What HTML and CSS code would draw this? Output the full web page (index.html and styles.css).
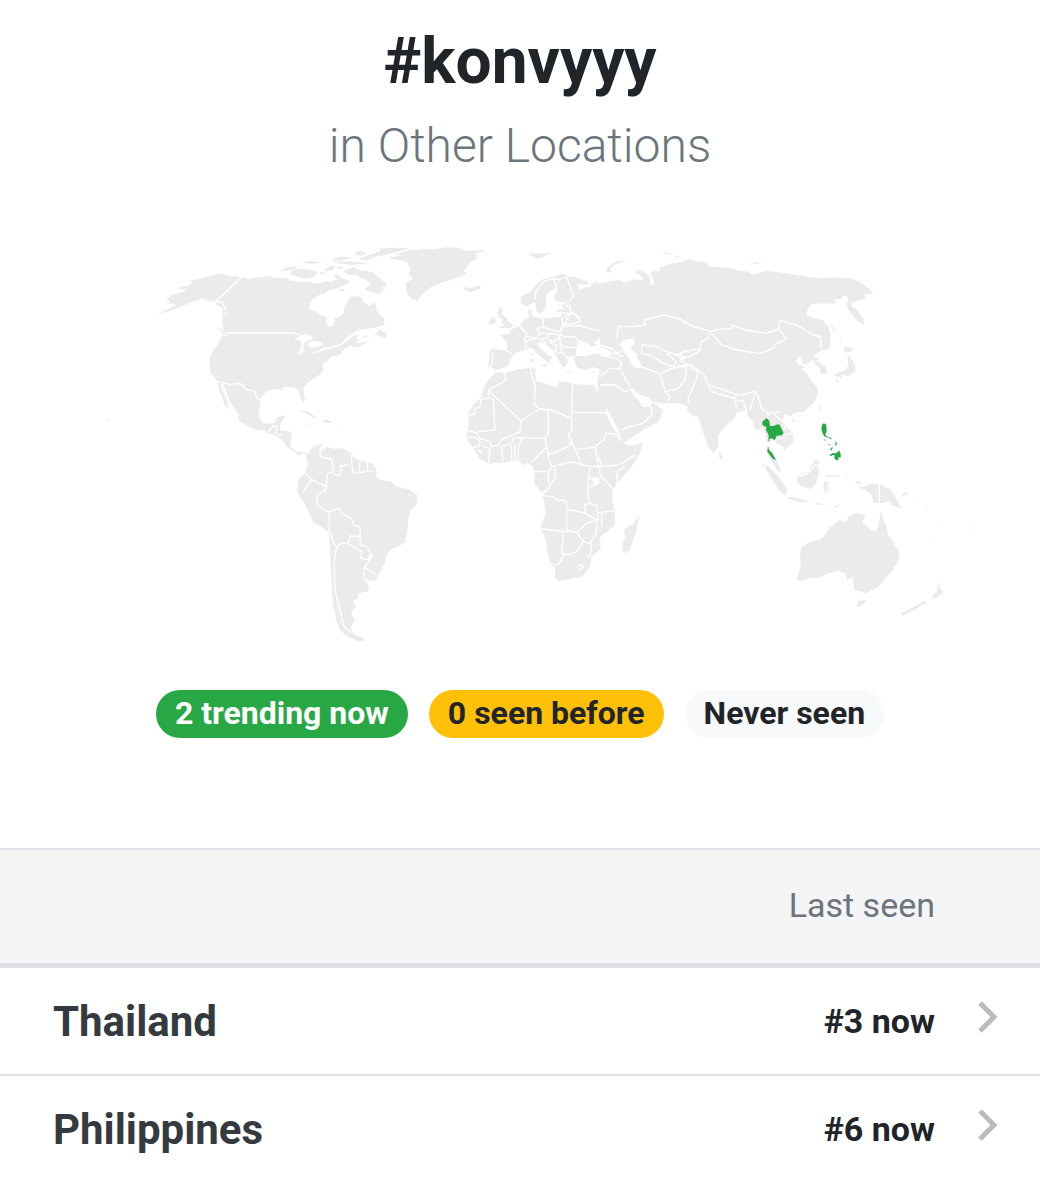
FILE: index.html
```html
<!DOCTYPE html>
<html lang="en">

<head>
    <meta charset="UTF-8">
    <meta name="viewport" content="width=device-width, initial-scale=1.0">
    <title>#konvyyy in Other Locations</title>
    <link rel="stylesheet" href="styles.css">
</head>

<body>
    <header class="page-header">
        <h1>#konvyyy</h1>
        <p class="lead">in Other Locations</p>
    </header>

    <svg class="world-map" viewBox="0 230 1040 420" role="img" aria-label="World map of trending countries">
        <!-- North and Central America -->
        <g transform="translate(140 230) scale(.3333)">
            <path class="land" d="M78 208L98 194 128 186 140 178 112 178 118 171 145 168 156 160 152 151 175 148 195 141 215 137 236 130 270 137 305 141 325 147 345 143 385 138 405 143 440 145 450 152 465 152 478 157 505 155 520 160 545 160 556 153 575 156 590 148 580 138 595 132 605 145 625 150 628 160 605 168 590 175 565 182 556 190 540 194 520 205 510 218 508 236 530 245 545 256 560 262 558 275 564 287 572 290 580 285 585 265 600 260 613 248 612 235 620 222 628 202 645 197 665 202 668 214 680 222 690 228 700 215 708 225 710 243 724 258 735 273 730 285 715 291 680 297 655 300 640 308 615 328 600 342 630 328 640 317 655 314 650 325 658 334 640 338 660 340 690 333 655 352 640 352 635 345 612 358 600 374 575 380 560 396 548 401 550 420 543 432 520 447 500 460 492 472 490 485 495 508 489 518 480 500 475 478 462 473 440 472 425 474 430 481 400 478 380 484 365 500 362 518 356 540 360 566 370 579 385 582 405 577 410 562 435 555 430 570 422 578 420 600 455 606 455 622 450 650 468 664 485 665 498 670 500 678 490 670 475 677 455 660 440 652 435 640 420 625 405 618 385 610 372 600 350 602 320 587 295 570 296 556 280 532 270 515 258 484 250 463 243 461 245 480 257 500 262 520 268 538 262 534 252 520 245 497 240 490 233 455 225 442 212 430 208 405 209 385 220 360 240 332 247 314 262 320 258 308 250 300 246 270 250 255 246 235 228 225 226 215 205 212 185 205 150 218 120 232 85 244 50 252 85 237 108 226 104 221 86 222 90 213Z"/>
            <path class="land" d="M420 125L440 112 475 108 458 119ZM447 133L465 116 500 118 533 126 524 140 495 146 470 140ZM480 96L520 93 550 99 505 101ZM565 110L584 105 582 120 552 125ZM538 126L557 129 545 136ZM575 90L600 80 640 82 600 93ZM572 97L620 94 690 100 630 105ZM590 112L612 108 600 120ZM640 70L660 62 682 69 660 78ZM650 88L720 64 780 53 780 60 740 74 700 82 680 92ZM610 124L640 112 665 122 695 125 720 145 740 165 722 169 735 180 724 184 718 194 690 184 672 178 692 163 680 149 660 142 650 136 625 136ZM590 182L608 175 616 184ZM703 315L718 300 720 292 725 305 738 312 740 324 728 318ZM663 317L685 318 675 323ZM233 292L250 302 263 319 248 310ZM472 540L505 545 530 563 520 564 500 550ZM545 573L560 568 580 578 555 578ZM500 582L512 583 505 586ZM590 581L600 582 592 585Z"/>
            <path class="land" d="M750 80L790 80 780 92 758 88Z"/>
            <path class="water" d="M465 327L490 313 512 315 520 326 500 332 490 345 491 362 484 374 476 370 485 345 482 333ZM505 336L522 332 542 336 548 345 530 352 515 355 505 347ZM505 372L540 360 552 352 572 352 535 366Z"/>
            <path class="border" d="M305 141L228 213 245 217 256 235 258 255M257 309H460L480 315M560 357L600 345 618 335M233 455L270 463 300 460 320 480 342 482 352 505 363 512M385 606L398 590V588H412M410 588V601L404 615M412 618L430 612 455 608M435 640L452 642M468 665V672"/>
        </g>

        <!-- South America -->
        <g transform="translate(280 430) scale(.3333)">
            <path class="land" d="M78 80L92 58 105 47 128 42 122 56 128 62 140 50 165 56 190 54 215 72 222 82 240 92 275 98 290 120 290 140 300 150 335 155 350 170 385 177 412 195 410 222 392 242 385 265 383 300 375 335 355 350 330 360 318 375 315 400 300 425 285 453 262 450 252 444 268 470 264 484 235 490 234 505 218 512 228 528 213 548 225 570 212 592 216 608 235 618 258 632 230 633 200 618 180 600 168 570 165 545 158 520 155 460 152 400 148 330 145 304 122 290 100 276 85 245 70 215 52 188 54 160 58 145 75 130 84 100Z"/>
            <path class="land" d="M0 5L33 8 30 45 15 44ZM225 618L245 622 235 628Z"/>
            <path class="border" d="M122 50L120 80 155 88 160 125 142 132 138 178 M160 130L175 138 185 128 180 108 205 105M215 75V100L220 130 240 128 262 124 280 122M240 94L238 125M263 97V122M75 130L95 148 68 188M95 148L120 162 138 168 135 180 112 195 112 225 135 242 148 245 178 235 185 250 215 265 220 285 240 292 240 320 210 318 205 342 188 338 170 350 162 340 148 304 148 245M205 342L245 365 242 385 265 388 272 370 262 350 242 345 240 320M272 370L278 378 254 412 252 444M254 412L290 436M170 350L162 400 165 480 180 540 190 585 212 608"/>
        </g>

        <!-- Greenland and Europe -->
        <g transform="translate(380 230) scale(.3333)">
            <path class="land" d="M25 85L70 75 45 72 85 62 130 57 165 58 200 52 245 53 240 58 270 62 320 60 285 72 292 85 270 98 262 112 250 122 262 130 240 140 205 152 180 160 155 170 135 185 112 213 92 205 80 188 78 160 98 145 85 132 92 120 82 98 60 90ZM0 55L60 53 90 55 50 66 0 78ZM0 150L20 160 15 172 0 170ZM0 258L12 265 10 280 0 283ZM0 300L20 310 15 325 0 318ZM250 168L265 176 300 166 303 175 270 187 255 181ZM445 72L480 70 515 68 480 85 465 85ZM678 120L700 100 745 91 700 105 690 118 695 127Z"/>
            <path class="land" d="M357 237L362 230 370 243 366 252 380 265 390 280 400 283 392 294 355 294 372 284 362 278 370 270 358 262 352 250ZM330 268L345 258 347 280 325 284ZM444 254L446 240 455 238 455 256 466 260 455 262Z"/>
            <path class="land" d="M330 360L345 356 380 362 382 340 372 326 360 315 385 312 400 295 418 290 430 272 445 264 448 256 462 260 490 266 520 262 543 260 546 247 530 244 530 238 550 238 545 223 570 217 530 215 522 200 533 180 530 172 515 182 498 196 498 212 502 220 492 242 480 252 470 245 465 215 440 230 425 222 422 200 450 185 468 165 490 147 515 142 545 132 570 138 600 147 625 155 625 163 590 163 600 180 618 172 635 170 632 160 648 160 645 150 658 160 680 156 715 150V370L690 362 660 348 662 332 640 335 650 344 635 350 620 338 600 330 590 348 588 370 588 380 570 385 560 382 564 398 550 415 540 398 530 378 520 362 500 345 482 336 470 340 480 355 500 372 518 385 510 388 508 402 495 390 470 370 456 352 440 358 420 364 402 372 390 388 388 402 375 413 345 420 335 412 324 410 328 380ZM480 406L500 402 498 412ZM450 388L460 386 459 396 452 398ZM453 368L458 368 456 382ZM555 425L575 426 565 430ZM630 426L650 420 640 428Z"/>
            <path class="land" d="M585 398L582 388 590 378 620 378 650 370 690 378 720 370V600L700 560 680 525 655 480 652 455 660 418 640 412 612 420 590 412Z"/>
            <path class="border" d="M465 210L468 185 490 155 520 145 538 150 560 140 570 140M520 145L530 172M560 142L570 170 580 200 568 215M336 368L340 380 332 410M378 361L395 370M420 290L440 310 435 330 440 358M430 300L425 292M490 265L488 292 470 295 480 310 470 325 440 320M438 335L470 325M490 292L515 300 540 305 550 290 545 262M475 310L510 310 500 325 475 328M510 310L540 315 545 290 600 287 635 298 662 302 664 320 655 332M555 262L567 250 585 252 602 275 575 282 550 282M548 248L570 250 555 280M568 220L572 245 600 262M540 315L525 335 505 330M540 315L555 320 585 320 595 335M540 340L555 352 588 352M540 320V345L545 365 560 378M510 338L530 345 525 365 545 370M552 222L570 235M660 415L710 410 715 385M660 450L690 440 715 415M500 340L485 330M555 382L585 378M665 345L720 362"/>
        </g>

        <!-- Africa and Arabia -->
        <g transform="translate(440 350) scale(.3333)">
            <path class="land" d="M140 98L150 85 165 68 180 66 195 70 235 57 275 53 288 58 284 75 290 88 283 92 310 98 335 108 352 110 358 95 380 95 400 102 440 105 462 103 470 125 475 115 480 130 498 168 498 190 510 215 520 235 540 262 550 280 570 287 608 278 600 310 578 345 545 385 520 418 516 430 518 460 524 480 525 525 500 545 480 562 482 598 455 620 450 650 425 680 390 688 352 692 345 680 345 655 330 635 322 600 318 570 302 535 304 520 315 500 316 480 312 450 304 428 282 398 285 365 275 345 262 340 250 345 235 332 215 332 195 338 170 338 145 342 115 322 95 290 78 262 85 235 85 190 100 165 125 140 130 115ZM598 495L590 540 570 600 555 610 546 602 550 575 556 560 552 538 580 522Z"/>
            <path class="water" d="M457 388L465 382 478 385 476 398 463 408Z"/>
            <path class="border" d="M195 70L198 92 145 120 145 145 122 148 120 170 105 175 103 193H80M145 120L242 213 300 177 283 165 285 105 275 80 272 53M145 145H160L165 240 115 245 110 250 85 242M80 262H105L120 275 118 290 95 292M110 250L120 265 150 275 155 290 175 285 190 265 220 255 240 245 242 213M300 177L325 180 325 250 315 265 245 263 220 265 215 280 185 290 188 335M300 177L330 178 395 205 398 102M402 188H498M395 205V240L385 255 395 275 385 290 325 315 315 265M215 285L215 332M225 280V330M245 263L235 300 235 332M320 290L325 320 335 350 325 365 285 365M275 340L290 320 320 290M335 350L395 335 425 345 475 350 480 350 532 345 555 335 585 315M395 275L405 298 465 292 490 270 500 250 525 252 548 275M405 298L425 345M465 292L475 350 480 355 480 375 520 418M555 350L532 365 530 410M475 320L485 345M325 365V395L330 410 305 430M345 350L345 385 320 420 305 437 340 440 350 452 375 450 385 480 405 482 435 490 435 465 450 460 443 440 445 400 450 350M450 385H480M450 410L475 400M450 460L470 468 475 510 440 520 410 548 380 540 380 482M435 490L470 510M524 482L475 488M305 537L380 545 410 545 430 575 450 580 468 550 470 515M370 545L365 610 370 620 355 643 340 643M365 610L385 615 410 605 430 575M455 580L450 620M485 490L485 530M130 290L150 295 145 342M95 292L115 320M115 300L125 310"/>
            <path class="border" d="M412 650L425 643 432 650 418 660ZM443 620L452 615"/>
        </g>

        <!-- Asia -->
        <g transform="translate(600 230) scale(.3333)">
            <path class="land" d="M0 160L30 155 60 150 75 158 100 148 130 150 122 138 108 128 112 120 128 122 145 135 152 155 150 165 162 162 162 150 150 130 165 122 178 125 180 112 215 100 240 97 265 88 290 94 320 97 328 110 360 112 400 115 415 122 445 125 460 133 500 122 560 130 620 140 660 145 700 142 750 145 780 155 800 170 822 190 790 195 800 208 775 210 765 215 755 218 756 228 772 240 790 265 793 286 772 272 745 240 740 220 745 210 740 198 728 198 725 208 700 207 710 215 700 222 675 220 635 222 622 240 620 255 640 265 668 270 685 290 692 310 690 345 685 358 665 362 650 370 640 382 655 385 660 400 675 408 683 425 672 433 662 430 658 410 645 402 638 388 620 405 608 400 600 378 588 392 595 402 618 410 605 418 620 430 632 450 650 470 655 490 640 520 610 545 580 550 572 560 555 552 548 572 565 595 578 612 580 635 565 650 552 662 550 650 530 640 520 625 512 632 505 625 503 645 520 670 530 690 540 718 525 708 510 685 500 665 503 640 495 605 488 595 465 600 462 580 445 560 440 545 430 540 410 550 400 570 375 590 355 615 355 650 340 670 325 650 308 605 295 560 278 558 260 540 265 530 240 520 190 520 155 515 145 502 120 495 95 472 90 478 105 500 120 515 125 530 150 530 158 515 190 540 175 575 130 600 68 640 55 600 20 535 0 500Z"/>
            <path class="water" d="M60 345L70 330 100 325 104 340 90 350 100 365 112 370 110 380 122 400 125 412 108 416 92 402 88 385 75 370ZM0 350L20 356 40 372 25 378 0 376Z"/>
            <path class="land" d="M20 115L45 95 80 90 45 103 30 118 35 128 20 125ZM180 64L205 68 222 75 200 72ZM220 76L242 80 228 82ZM450 97L490 99 465 102ZM682 272L700 292 712 308 702 302ZM720 322L728 328 722 330ZM735 350L762 355 750 365 735 368 730 360ZM742 375L752 382 765 405 766 425 745 438 725 435 712 442 702 436 720 425 740 418 745 400ZM715 440L730 438 722 446ZM705 445L715 450 712 464ZM655 530L660 522 662 538 658 545ZM575 570L586 568 580 578ZM357 662L368 680 365 688 358 685Z"/>
            <path class="border" d="M50 325L55 290 100 290 135 285 135 270 190 255 235 265 280 290 335 305 345 300 395 295 395 285 435 300 500 310 535 298 540 272 590 285 640 315 660 320 665 355M335 310L365 345 410 360 480 370 520 355 525 345 560 325 535 298M330 308L325 325 305 335 300 355 250 365 235 375 200 365 170 350 125 345 125 370M305 358L270 380 240 385 255 400 275 405 270 415 310 430 325 465 400 490 425 495 465 485 475 500 485 535 505 550 545 545M125 370L150 375 190 400 220 410 230 395 200 370M225 375L255 380 240 395M230 410L255 405 260 425 255 450 235 475 195 485 180 430 125 410M195 485L210 500 205 515M185 430L215 415 270 405 295 420 290 445 275 480 265 500 265 520M325 470L335 485 400 505 410 495M405 505L410 535M425 505L435 525 440 545 430 515 410 510M465 490L450 540M505 550L500 568M515 545L530 560 550 575 555 600M550 610L560 615 575 610M530 625L555 625M0 375L50 385 65 400 60 415 72 440 90 470M0 440L30 415 60 415M0 465L45 465 75 485 90 480M0 345L35 355 55 375 70 380M40 370L65 365M65 600L90 590 130 580 155 555 155 530M645 395L660 390"/>
            <path class="trending" d="M487 575L500 564 508 572 510 588 522 588 528 584 538 583 551 608 546 616 530 617 524 631 515 625 508 627 509 636 505 632 506 615 497 598 500 592 488 586ZM504 649L507 660 516 668 528 690 518 686 502 665ZM667 583L672 580 679 584 680 603 676 615 684 622 695 624 694 628 680 622 672 618 666 605 664 595ZM672 627L677 630 675 634ZM685 642L690 643 689 648ZM690 660L695 652 699 653 694 661ZM706 632L711 640 709 646 704 645 707 640ZM689 675L697 670 706 670 714 666 718 661 722 672 722 684 715 682 715 691 709 691 703 685 704 676 698 675 691 679Z"/>
        </g>

        <!-- Indonesia, Australia and the Pacific -->
        <g transform="translate(760 450) scale(.3333)">
            <path class="land" d="M3 40L20 45 45 70 65 92 80 115 80 137 65 130 42 98 25 70ZM40 32L55 42 65 70 48 58ZM110 78L125 72 145 65 155 45 168 27 182 40 172 52 178 65 168 98 155 117 125 110 112 98ZM83 140L115 144 152 156 120 157 88 148ZM165 158L205 164 170 164ZM220 170L242 160 228 173ZM192 92L195 94 212 100 202 106 212 128 200 115 195 132 190 112ZM196 76L238 76 235 80 196 80ZM254 72L260 70 258 82ZM285 92L302 93 305 103 288 100ZM295 112L320 108 340 100 365 105 392 120 405 140 425 175 400 168 385 152 370 160 342 158 335 135 315 120ZM425 134L442 124 444 132 430 138Z"/>
            <path class="land" d="M362 183L370 210 380 225 383 255 397 270 405 288 415 300 418 325 408 345 395 365 375 385 355 410 345 417 315 430 300 423 283 422 280 400 278 380 262 390 255 370 235 363 205 370 180 382 150 383 120 394 110 388 122 350 120 315 125 292 145 278 185 265 200 250 202 240 220 225 240 210 255 218 268 198 290 188 316 195 308 215 325 235 345 245 355 230ZM293 452L318 450 308 464 293 472ZM535 395L540 415 550 427 538 438 520 446 517 438 530 425ZM422 490L455 475 495 452 499 457 470 475 440 492 428 497ZM520 270L530 275 525 276ZM627 243L633 240 633 245ZM640 233L648 232 645 236ZM470 137L478 141 473 142ZM495 165L508 171 500 172ZM530 230L535 235 531 235Z"/>
            <path class="border" d="M358 75V165M112 78L135 75 148 65 165 45 180 42M15 30V58"/>
        </g>
        <circle class="land" cx="109" cy="420" r="1"/>
    </svg>

    <div class="legend">
        <span class="badge badge-success">2 trending now</span>
        <span class="badge badge-warning">0 seen before</span>
        <span class="badge badge-light">Never seen</span>
    </div>

    <table class="locations">
        <thead>
            <tr>
                <th class="name" aria-label="Location"></th>
                <th class="seen">Last seen</th>
                <th class="arrow" aria-label="Details"></th>
            </tr>
        </thead>
        <tbody>
            <tr>
                <th class="name" scope="row"><a href="#thailand">Thailand</a></th>
                <td class="seen">#3 now</td>
                <td class="arrow">
                    <a href="#thailand" aria-label="Thailand details">
                        <svg class="chevron" viewBox="0 0 22 32"><path d="M3 2L17 16 3 30"/></svg>
                    </a>
                </td>
            </tr>
            <tr>
                <th class="name" scope="row"><a href="#philippines">Philippines</a></th>
                <td class="seen">#6 now</td>
                <td class="arrow">
                    <a href="#philippines" aria-label="Philippines details">
                        <svg class="chevron" viewBox="0 0 22 32"><path d="M3 2L17 16 3 30"/></svg>
                    </a>
                </td>
            </tr>
        </tbody>
    </table>
</body>

</html>
```

FILE: styles.css
```css
body {
    margin: 0;
    font-family: Roboto, sans-serif;
    color: #212529;
    background-color: #fff;
}

.page-header {
    padding-top: 24px;
    text-align: center;
}

h1 {
    margin: 0;
    font-size: 64px;
    font-weight: 700;
    line-height: 76px;
}

.lead {
    margin: 10px 0 48px;
    font-size: 48px;
    font-weight: 300;
    line-height: 72px;
    color: #6c757d;
}

.world-map {
    display: block;
    width: 100%;
}

.land {
    fill: #ebebeb;
}

.water {
    fill: #fff;
}

.border {
    fill: none;
    stroke: #fff;
    stroke-width: 4;
    stroke-linejoin: round;
}

.trending {
    fill: #28a745;
}

.legend {
    display: flex;
    flex-wrap: wrap;
    justify-content: center;
    gap: 21px;
    padding: 40px 20px 110px;
}

.badge {
    padding: 0 19px 2px;
    border-radius: 24px;
    font-size: 32px;
    font-weight: 700;
    line-height: 46px;
}

.badge-success {
    color: #fff;
    background-color: #28a745;
}

.badge-warning {
    background-color: #ffc107;
}

.badge-light {
    background-color: #f8f9fa;
}

.locations {
    width: 100%;
    border-collapse: separate;
    border-spacing: 0;
}

.locations th,
.locations td {
    padding: 0;
    height: 106px;
    border-bottom: 2px solid #dee2e6;
}

.locations thead th {
    height: 110px;
    padding-bottom: 3px;
    border-top: 2px solid #dee2e6;
    border-bottom: 5px solid #dee2e6;
    background-color: #f5f5f5;
    font-weight: 400;
    color: #6c757d;
}

.locations tbody tr:last-child > * {
    border-bottom: none;
}

.locations .name {
    padding-left: 53px;
    font-size: 42px;
    text-align: left;
}

.locations .seen {
    font-size: 34px;
    text-align: right;
}

.locations tbody .seen {
    font-weight: 700;
}

.locations .arrow {
    width: 105px;
}

.locations a {
    color: #343a40;
    text-decoration: none;
}

.chevron {
    display: block;
    width: 22px;
    height: 32px;
    margin: 0 41px 8px auto;
    fill: none;
    stroke: #bbb;
    stroke-width: 5;
}
```
